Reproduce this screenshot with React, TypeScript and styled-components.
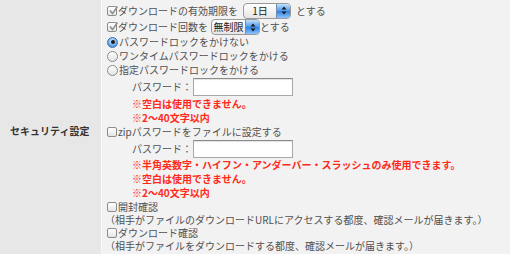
import React from "react";
import styled, { createGlobalStyle } from "styled-components";

const Global = createGlobalStyle`
  html, body { margin: 0; padding: 0; background: #f2f2f2; }
  body { font-family: "Noto Sans CJK JP", "Noto Sans", sans-serif; font-size: 10px; color: #505050; }
`;

const Table = styled.div`
  display: flex;
  width: 510px;
  height: 254px;
  overflow: hidden;
`;

const LabelCell = styled.div`
  width: 102px;
  flex: none;
  background: #e7e7e7;
  border-right: 1px solid #fafafa;
  display: flex;
  align-items: center;
  padding-left: 10px;
  box-sizing: border-box;
  font-weight: bold;
  color: #333;
  font-size: 10px;
  padding-top: 6px;
`;

const ValueCell = styled.div`
  flex: 1;
  background: #f2f2f2;
  padding: 2px 0 0 3px;
  display: flex;
  flex-direction: column;
`;

const Line = styled.div<{ $h?: number; $indent?: number }>`
  display: flex;
  align-items: center;
  height: ${(p) => p.$h ?? 14}px;
  line-height: ${(p) => Math.min(p.$h ?? 14, 14)}px;
  flex: none;
  padding-left: ${(p) => p.$indent ?? 0}px;
  white-space: nowrap;
`;

const Warn = styled(Line)`
  color: #ff2a1a;
  font-weight: bold;
`;

const Box = styled.span`
  width: 10px;
  height: 10px;
  border: 1px solid #8c8c8c;
  border-radius: 2px;
  background: linear-gradient(#ffffff, #e4e4e4);
  box-sizing: border-box;
  position: relative;
  margin: 0 1px 0 2px;
  flex: none;
  display: inline-flex;
  align-items: center;
  justify-content: center;
`;

const Radio = styled.span<{ $on?: boolean }>`
  width: 11px;
  height: 11px;
  border-radius: 50%;
  box-sizing: border-box;
  flex: none;
  margin: 0 1px 0 2px;
  border: 1px solid ${(p) => (p.$on ? "#3a6fb0" : "#8c8c8c")};
  background: ${(p) =>
    p.$on
      ? "radial-gradient(circle at 50% 35%, #d8ecff 0%, #6fb0f0 55%, #2f74c8 100%)"
      : "linear-gradient(#ffffff, #e2e2e2)"};
  display: inline-flex;
  align-items: center;
  justify-content: center;
  &::after {
    content: "";
    display: ${(p) => (p.$on ? "block" : "none")};
    width: 4px;
    height: 4px;
    border-radius: 50%;
    background: #1a1a1a;
  }
`;

const Select = styled.span<{ $w: number }>`
  display: inline-flex;
  align-items: stretch;
  width: ${(p) => p.$w}px;
  height: 16px;
  border: 1px solid #9a9a9a;
  border-radius: 4px;
  box-sizing: border-box;
  background: linear-gradient(#ffffff, #e6e6e6);
  overflow: hidden;
  flex: none;
  color: #222;
`;

const SelectText = styled.span`
  flex: 1;
  display: flex;
  align-items: center;
  justify-content: center;
  font-size: 10px;
`;

const SelectArrow = styled.span`
  width: 13px;
  background: linear-gradient(#bfe0ff, #4d97e8 50%, #2f7ee0 51%, #8cc4ff);
  border-left: 1px solid #6d8db5;
  display: flex;
  align-items: center;
  justify-content: center;
`;

const Input = styled.span`
  display: inline-block;
  width: 100px;
  height: 18px;
  border: 1px solid #a8a8a8;
  border-top-color: #8a8a8a;
  background: #fff;
  box-sizing: border-box;
  box-shadow: inset 0 1px 1px rgba(0, 0, 0, 0.12);
`;

const Gap = styled.span<{ $w: number }>`
  display: inline-block;
  width: ${(p) => p.$w}px;
  flex: none;
`;

const Check = () => (
  <svg width="9" height="9" viewBox="0 0 9 9" style={{ position: "absolute", left: 1, top: -1 }}>
    <path d="M1 4.5 L3.5 7.5 L8.5 0.5" fill="none" stroke="#8a8a8a" strokeWidth="1.4" />
  </svg>
);

const Arrows = () => (
  <svg width="6" height="9" viewBox="0 0 6 9">
    <path d="M0.5 3.5 L3 0.5 L5.5 3.5 Z" fill="#1a1a1a" />
    <path d="M0.5 5.5 L3 8.5 L5.5 5.5 Z" fill="#1a1a1a" />
  </svg>
);

const CheckBox = ({ checked }: { checked?: boolean }) => <Box>{checked && <Check />}</Box>;

const Sel = ({ w, text }: { w: number; text: string }) => (
  <Select $w={w}>
    <SelectText>{text}</SelectText>
    <SelectArrow>
      <Arrows />
    </SelectArrow>
  </Select>
);

export default function App() {
  return (
    <>
      <Global />
      <Table>
        <LabelCell>セキュリティ設定</LabelCell>
        <ValueCell>
          <Line $h={17}>
            <CheckBox checked />
            ダウンロードの有効期限を
            <Gap $w={5} />
            <Sel w={48} text="1日" />
            <Gap $w={5} />
            とする
          </Line>
          <Line $h={16}>
            <CheckBox checked />
            ダウンロード回数を
            <Gap $w={3} />
            <Sel w={49} text="無制限" />
            とする
          </Line>
          <Line>
            <Radio $on />
            パスワードロックをかけない
          </Line>
          <Line>
            <Radio />
            ワンタイムパスワードロックをかける
          </Line>
          <Line>
            <Radio />
            指定パスワードロックをかける
          </Line>
          <Line $h={20} $indent={27}>
            パスワード：
            <Gap $w={1} />
            <Input />
          </Line>
          <Warn $indent={27}>※空白は使用できません。</Warn>
          <Warn $indent={27}>※2〜40文字以内</Warn>
          <Line>
            <CheckBox />
            zipパスワードをファイルに設定する
          </Line>
          <Line $h={19} $indent={27}>
            パスワード：
            <Gap $w={1} />
            <Input />
          </Line>
          <Warn $indent={27}>※半角英数字・ハイフン・アンダーバー・スラッシュのみ使用できます。</Warn>
          <Warn $indent={27}>※空白は使用できません。</Warn>
          <Warn $indent={27}>※2〜40文字以内</Warn>
          <Line $h={13}>
            <CheckBox />
            開封確認
          </Line>
          <Line $h={13}>（相手がファイルのダウンロードURLにアクセスする都度、確認メールが届きます。）</Line>
          <Line $h={13}>
            <CheckBox />
            ダウンロード確認
          </Line>
          <Line $h={13}>（相手がファイルをダウンロードする都度、確認メールが届きます。）</Line>
        </ValueCell>
      </Table>
    </>
  );
}
